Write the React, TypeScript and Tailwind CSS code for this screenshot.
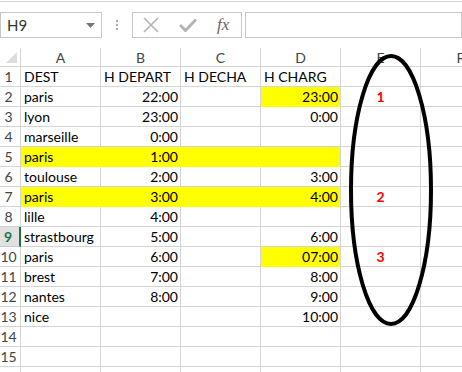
import React from 'react';

type Cell = { v?: string; right?: boolean; y?: boolean; red?: boolean };

const Y = true;

// rows of cells A..E
const rows: Cell[][] = [
  [{ v: 'DEST' }, { v: 'H DEPART' }, { v: 'H DECHA' }, { v: 'H CHARG' }, {}],
  [{ v: 'paris' }, { v: '22:00', right: true }, {}, { v: '23:00', right: true, y: Y }, { v: '1', red: true }],
  [{ v: 'lyon' }, { v: '23:00', right: true }, {}, { v: '0:00', right: true }, {}],
  [{ v: 'marseille' }, { v: '0:00', right: true }, {}, {}, {}],
  [{ v: 'paris', y: Y }, { v: '1:00', right: true, y: Y }, { y: Y }, { y: Y }, {}],
  [{ v: 'toulouse' }, { v: '2:00', right: true }, {}, { v: '3:00', right: true }, {}],
  [{ v: 'paris', y: Y }, { v: '3:00', right: true, y: Y }, { y: Y }, { v: '4:00', right: true, y: Y }, { v: '2', red: true }],
  [{ v: 'lille' }, { v: '4:00', right: true }, {}, {}, {}],
  [{ v: 'strastbourg' }, { v: '5:00', right: true }, {}, { v: '6:00', right: true }, {}],
  [{ v: 'paris' }, { v: '6:00', right: true }, {}, { v: '07:00', right: true, y: Y }, { v: '3', red: true }],
  [{ v: 'brest' }, { v: '7:00', right: true }, {}, { v: '8:00', right: true }, {}],
  [{ v: 'nantes' }, { v: '8:00', right: true }, {}, { v: '9:00', right: true }, {}],
  [{ v: 'nice' }, {}, {}, { v: '10:00', right: true }, {}],
  [{}, {}, {}, {}, {}],
  [{}, {}, {}, {}, {}],
  [{}, {}, {}, {}, {}],
];

const font = { fontFamily: 'Lato, "Open Sans", sans-serif' };

function FormulaBar() {
  return (
    <div className="flex items-center h-[26px] mt-[10px]">
      <div className="w-[102px] h-full border border-[#c6c6c6] flex items-center justify-between pl-[6px] pr-[6px]">
        <span className="text-[15px] text-[#333]">H9</span>
        <svg width="9" height="5" viewBox="0 0 9 5">
          <path d="M0 0 H9 L4.5 5 Z" fill="#777" />
        </svg>
      </div>
      <div className="w-[30px] flex flex-col items-center gap-[2px]">
        <span className="w-[2px] h-[2px] bg-[#aaa]" />
        <span className="w-[2px] h-[2px] bg-[#aaa]" />
        <span className="w-[2px] h-[2px] bg-[#aaa]" />
      </div>
      <div className="w-[110px] h-full border border-[#c6c6c6] flex items-center pl-[10px] gap-[20px]">
        <svg width="16" height="16" viewBox="0 0 16 16">
          <path d="M1 1 L15 15 M15 1 L1 15" stroke="#b4b4b4" strokeWidth="1.6" />
        </svg>
        <svg width="18" height="14" viewBox="0 0 18 14">
          <path d="M1 7 L6.5 12.5 L17 1.5" stroke="#b4b4b4" strokeWidth="3" fill="none" />
        </svg>
        <span className="text-[17px] text-[#666] italic" style={{ fontFamily: '"Liberation Serif", serif' }}>
          fx
        </span>
      </div>
      <div className="ml-[3px] flex-1 h-full border border-[#c6c6c6]" />
    </div>
  );
}

export default function App() {
  return (
    <div className="relative w-[462px] h-[372px] overflow-hidden bg-white text-black" style={font}>
      <div className="h-[1px] mt-[1px] bg-[#d4d4d4]" />
      <FormulaBar />

      <div className="mt-[10px]">
        {/* column headers */}
        <div className="flex h-[19px] border-b border-[#d4d4d4]">
          <div className="w-[21px] shrink-0 border-r border-[#d4d4d4] relative">
            <svg className="absolute right-[3px] bottom-[3px]" width="11" height="11" viewBox="0 0 11 11">
              <path d="M11 0 V11 H0 Z" fill="#dcdcdc" />
            </svg>
          </div>
          {['A', 'B', 'C', 'D', 'E', 'F'].map((c) => (
            <div key={c} className="w-[80px] shrink-0 border-r border-[#d4d4d4] flex items-center justify-center text-[14px] text-[#444]">
              {c}
            </div>
          ))}
        </div>

        {rows.map((r, i) => {
          const n = i + 1;
          const sel = n === 9;
          return (
            <div key={n} className="flex h-[20px]">
              <div
                className={`w-[21px] shrink-0 border-b flex items-center justify-center pr-[3px] text-[14px] ${
                  sel
                    ? 'bg-[#e1e1e1] border-[#c8c8c8] border-r-2 border-r-[#217346] text-[#217346] font-bold'
                    : 'border-[#d4d4d4] border-r text-[#444]'
                }`}
              >
                {n < 16 ? n : ''}
              </div>
              {r.map((c, j) => {
                const next = r[j + 1];
                const rb = c.y && next && next.y ? 'border-r-[#ffff00]' : 'border-r-[#d4d4d4]';
                return (
                  <div
                    key={j}
                    className={`w-[80px] shrink-0 border-r border-b ${rb} ${
                      c.y ? 'bg-[#ffff00] border-b-[#ffff00]' : 'border-b-[#d4d4d4]'
                    } flex items-center overflow-hidden whitespace-nowrap text-[14px] px-[3px] ${
                      c.right ? 'justify-end pr-[2px]' : c.red ? 'justify-center' : ''
                    } ${c.red ? 'text-[#ff0000] font-bold' : ''}`}
                  >
                    {c.v}
                  </div>
                );
              })}
              <div className="flex-1 border-b border-[#d4d4d4]" />
            </div>
          );
        })}
      </div>

      <svg className="absolute left-0 top-0 pointer-events-none" width="462" height="372">
        <ellipse cx="391" cy="190" rx="40" ry="134" fill="none" stroke="#000" strokeWidth="4" />
      </svg>
    </div>
  );
}
